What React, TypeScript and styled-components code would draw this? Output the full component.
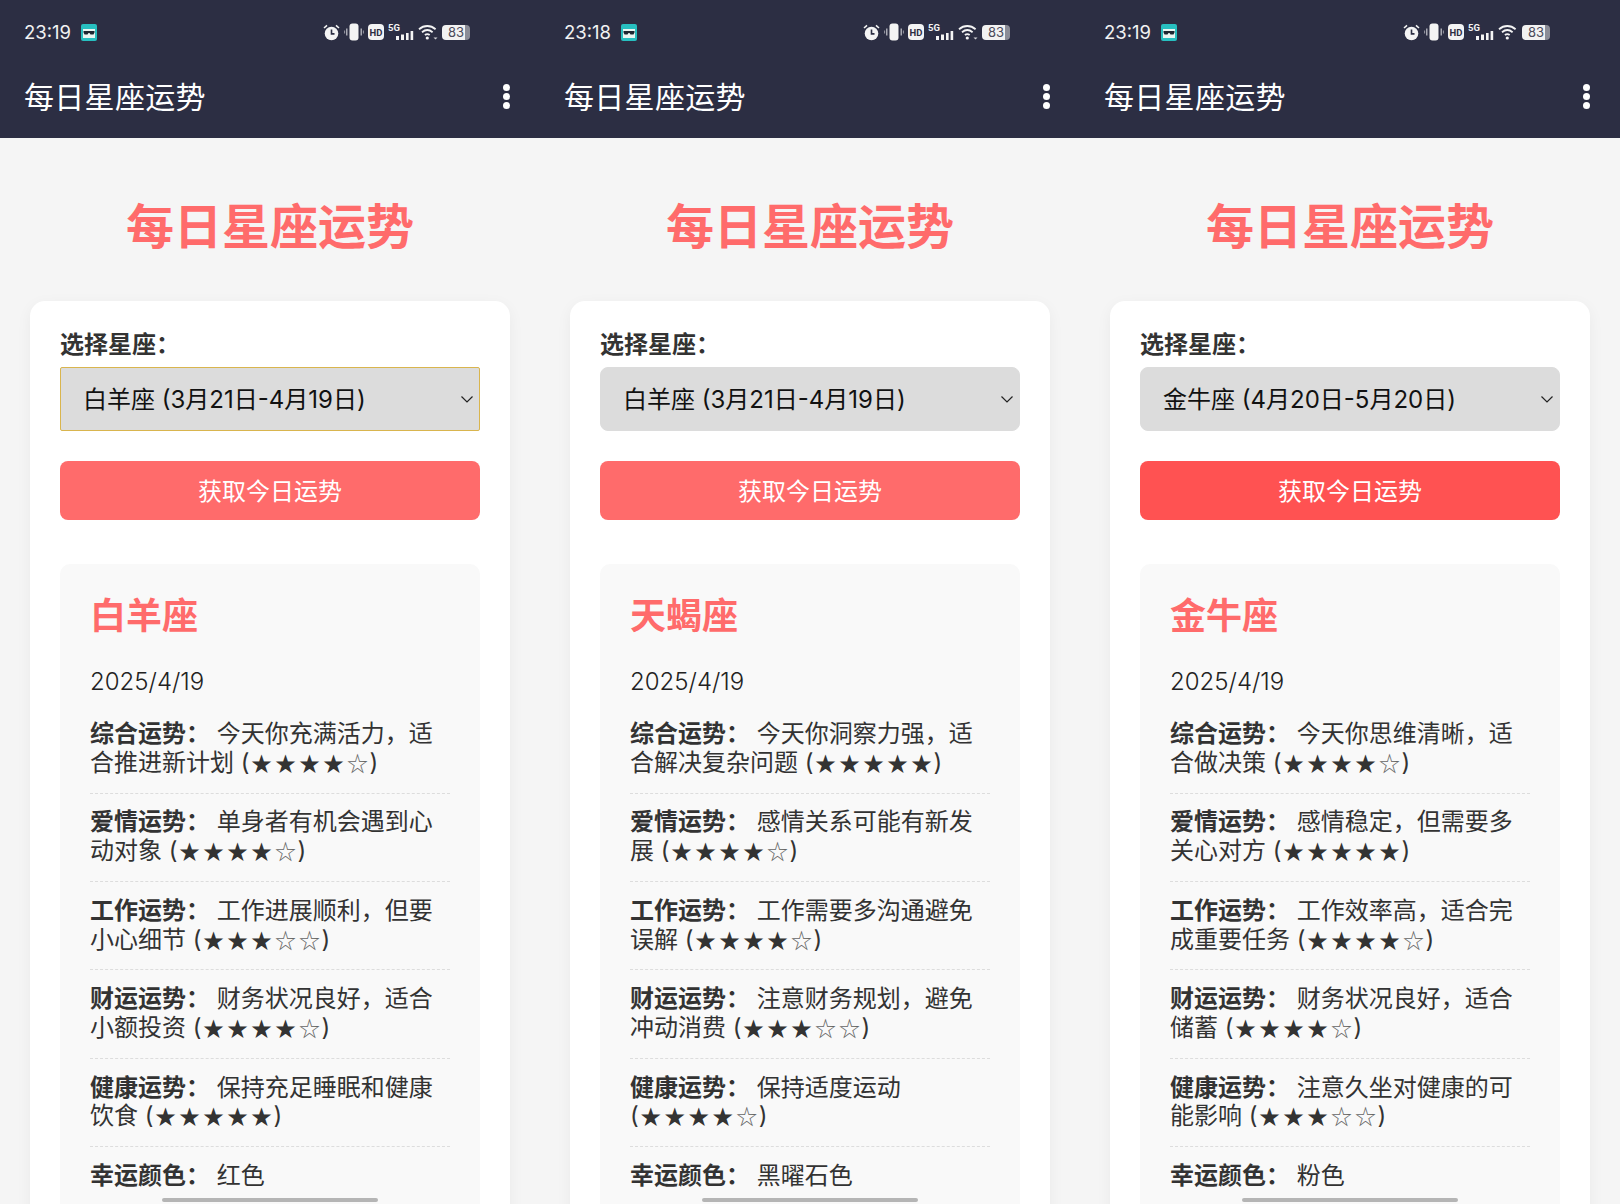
import styled, { createGlobalStyle } from "styled-components";

const GlobalStyle = createGlobalStyle`
  html, body {
    margin: 0;
    padding: 0;
    background: #f5f5f5;
  }
  * {
    box-sizing: border-box;
  }
`;

const Screens = styled.div`
  display: grid;
  grid-template-columns: repeat(3, 540px);
  width: 1620px;
  height: 1204px;
  overflow: hidden;
  font-family: Inter, "Noto Sans CJK SC", sans-serif;
`;

const Phone = styled.div`
  position: relative;
  height: 1204px;
  overflow: hidden;
  background: #f5f5f5;
`;

const TopBar = styled.header`
  height: 138px;
  background: #2c2e43;
  color: #fff;
  padding: 0 24px;
`;

const StatusBar = styled.div`
  display: flex;
  align-items: center;
  height: 64px;
  padding-right: 46px;
`;

const Time = styled.span`
  font-size: 18.5px;
  margin-right: 10px;
  color: #f2f2f2;
`;

const StatusIcons = styled.div`
  display: flex;
  align-items: center;
  gap: 4px;
  margin-left: auto;
`;

const Battery = styled.span`
  display: block;
  width: 28px;
  height: 15px;
  border-radius: 4px;
  background: linear-gradient(90deg, #f2f2f2 0 83%, #8b8c96 83% 100%);
  color: #4a4b5a;
  font-size: 13px;
  line-height: 15px;
  text-align: center;
`;

const AppBar = styled.div`
  display: flex;
  align-items: center;
  justify-content: space-between;
  height: 66px;
  padding-right: 6px;
`;

const AppTitle = styled.div`
  font-size: 30px;
  line-height: 42px;
  letter-spacing: 0.3px;
`;

const Dots = styled.div`
  display: flex;
  flex-direction: column;
  gap: 2px;
  margin-bottom: 2px;
  i {
    display: block;
    width: 7px;
    height: 7px;
    border-radius: 50%;
    background: #fff;
  }
`;

const Content = styled.main`
  padding: 57px 30px 0;
`;

const Heading = styled.h1`
  margin: 0 0 42px;
  color: #ff6b6b;
  font-size: 48px;
  line-height: 64px;
  font-weight: 700;
  text-align: center;
`;

const Card = styled.section`
  background: #fff;
  border-radius: 15px;
  box-shadow: 0 4px 15px rgba(0, 0, 0, 0.05);
  padding: 30px;
`;

const FieldLabel = styled.label`
  display: block;
  margin-bottom: 8px;
  color: #333;
  font-size: 24px;
  line-height: 28px;
  font-weight: 700;
`;

const SelectBox = styled.div<{ $focused?: boolean }>`
  display: flex;
  align-items: center;
  justify-content: space-between;
  height: 64px;
  padding: 0 5px 3px 22px;
  background: #dcdcdc;
  border: 1px solid ${(p) => (p.$focused ? "#d9b54e" : "#dcdcdc")};
  border-radius: ${(p) => (p.$focused ? "2px" : "8px")};
  color: #111;
  font-size: 24px;
`;

const ChevronIcon = styled.svg`
  margin-top: 3px;
`;

const GetButton = styled.button<{ $pressed?: boolean }>`
  display: block;
  width: 100%;
  height: 59px;
  margin-top: 30px;
  padding: 0 0 2px;
  border: 0;
  border-radius: 8px;
  background: ${(p) => (p.$pressed ? "#ff5252" : "#ff6b6b")};
  color: #fff;
  font-family: inherit;
  font-size: 24px;
`;

const ResultBox = styled.div`
  margin-top: 44px;
  padding: 30px;
  background: #f9f9f9;
  border-radius: 10px;
`;

const SignName = styled.h2`
  margin: 0 0 29px;
  color: #ff6b6b;
  font-size: 36px;
  line-height: 44px;
  font-weight: 700;
`;

const DateText = styled.p`
  margin: 0 0 23px;
  color: #222;
  font-size: 24px;
  line-height: 30px;
  font-weight: 300;
`;

const Row = styled.p`
  margin: 0 0 14.8px;
  padding-bottom: 15px;
  border-bottom: 1px dashed #ddd;
  color: #333;
  font-size: 24px;
  line-height: 28.8px;
  &:last-child {
    border-bottom: 0;
  }
  strong {
    font-weight: 700;
  }
`;

const Rating = styled.span`
  white-space: nowrap;
  letter-spacing: -0.1px;
`;

const Star = styled.span<{ $empty?: boolean }>`
  display: inline-block;
  width: 24px;
  font-family: "Noto Sans CJK SC", sans-serif;
  font-size: 21px;
  line-height: 20px;
  text-align: center;
  color: ${(p) => (p.$empty ? "#666" : "#333")};
`;

const ScrollThumb = styled.div`
  position: absolute;
  left: 162px;
  bottom: 2px;
  width: 216px;
  height: 4px;
  border-radius: 2px;
  background: #b5b5b5;
`;

function AppIcon() {
  return (
    <svg width="16" height="17" viewBox="0 0 16 17">
      <rect width="16" height="17" rx="2" fill="#27bfc0" />
      <rect x="2" y="5" width="12" height="9" fill="#e9f5f1" />
      <path d="M2.5 7h11v1.6l-1 2h-3l-1-1.6h-1l-1 1.6h-3l-1-2z" fill="#1d2530" />
    </svg>
  );
}

function AlarmIcon() {
  return (
    <svg width="17" height="17" viewBox="0 0 17 17">
      <circle cx="8.5" cy="9.5" r="6.8" fill="#f4f4f4" />
      <path d="M8.5 5.5v4.4h3" fill="none" stroke="#2c2e43" strokeWidth="1.6" />
      <path d="M1 4l3-2.6M16 4l-3-2.6" stroke="#f4f4f4" strokeWidth="1.6" />
    </svg>
  );
}

function VibrateIcon() {
  return (
    <svg width="20" height="18" viewBox="0 0 20 18">
      <rect x="5.5" y="0.5" width="9" height="17" rx="3" fill="#f4f4f4" />
      <path d="M2.8 5.5v7M17.2 5.5v7" stroke="#c9c9cf" strokeWidth="1.2" />
      <path d="M0.6 7.5v3M19.4 7.5v3" stroke="#9a9aa5" strokeWidth="1" />
    </svg>
  );
}

function HdIcon() {
  return (
    <svg width="16" height="16" viewBox="0 0 16 16">
      <rect width="16" height="16" rx="4" fill="#f4f4f4" />
      <text x="8" y="11.5" fontSize="9.5" fontWeight="700" textAnchor="middle" fill="#2c2e43" fontFamily="Roboto, sans-serif">HD</text>
    </svg>
  );
}

function SignalIcon() {
  return (
    <svg width="26" height="18" viewBox="0 0 26 18">
      <text x="0" y="8" fontSize="9.5" fontWeight="700" fill="#f4f4f4" fontFamily="Roboto, sans-serif">5G</text>
      <rect x="8" y="13" width="3" height="4" fill="#f4f4f4" />
      <rect x="13" y="11.5" width="3" height="5.5" fill="#f4f4f4" />
      <rect x="18" y="10" width="2.6" height="7" fill="#f4f4f4" />
      <rect x="22.6" y="8" width="2.6" height="9" fill="#f4f4f4" />
    </svg>
  );
}

function WifiIcon({ small }: { small?: boolean }) {
  return (
    <svg width="20" height="16" viewBox="0 0 20 16">
      <path d="M1 5.2C6 .9 12.6 .9 17.6 5.2M4 8.2c3.3-2.7 7.3-2.7 10.6 0M6.9 11c1.7-1.3 3.1-1.3 4.8 0" fill="none" stroke="#f4f4f4" strokeWidth="1.8" />
      <circle cx="9.3" cy="14" r="1.6" fill="#f4f4f4" />
      {small && <path d="M15.5 13.5h4l-2 2z" fill="#d5d5da" />}
    </svg>
  );
}

function Chevron() {
  return (
    <ChevronIcon width="14" height="9" viewBox="0 0 14 9">
      <path d="M1.5 1.5L7 7l5.5-5.5" fill="none" stroke="#222" strokeWidth="1.2" />
    </ChevronIcon>
  );
}

// the rating stays on one line, stars evenly spaced
function RowValue({ text, stars }: { text: string; stars?: string }) {
  return (
    <>
      {text}
      {stars && " "}
      {stars && (
        <Rating>
          (
          {Array.from(stars).map((ch, i) => (
            <Star key={i} $empty={ch === "☆"}>{ch}</Star>
          ))}
          )
        </Rating>
      )}
    </>
  );
}

const screens = [
  {
    time: "23:19",
    wifiDot: true,
    select: "白羊座 (3月21日-4月19日)",
    focused: true,
    pressed: false,
    sign: "白羊座",
    rows: [
      ["综合运势：", "今天你充满活力，适合推进新计划", "★★★★☆"],
      ["爱情运势：", "单身者有机会遇到心动对象", "★★★★☆"],
      ["工作运势：", "工作进展顺利，但要小心细节", "★★★☆☆"],
      ["财运运势：", "财务状况良好，适合小额投资", "★★★★☆"],
      ["健康运势：", "保持充足睡眠和健康饮食", "★★★★★"],
      ["幸运颜色：", "红色"],
    ],
  },
  {
    time: "23:18",
    wifiDot: true,
    select: "白羊座 (3月21日-4月19日)",
    focused: false,
    pressed: false,
    sign: "天蝎座",
    rows: [
      ["综合运势：", "今天你洞察力强，适合解决复杂问题", "★★★★★"],
      ["爱情运势：", "感情关系可能有新发展", "★★★★☆"],
      ["工作运势：", "工作需要多沟通避免误解", "★★★★☆"],
      ["财运运势：", "注意财务规划，避免冲动消费", "★★★☆☆"],
      ["健康运势：", "保持适度运动", "★★★★☆"],
      ["幸运颜色：", "黑曜石色"],
    ],
  },
  {
    time: "23:19",
    wifiDot: false,
    select: "金牛座 (4月20日-5月20日)",
    focused: false,
    pressed: true,
    sign: "金牛座",
    rows: [
      ["综合运势：", "今天你思维清晰，适合做决策", "★★★★☆"],
      ["爱情运势：", "感情稳定，但需要多关心对方", "★★★★★"],
      ["工作运势：", "工作效率高，适合完成重要任务", "★★★★☆"],
      ["财运运势：", "财务状况良好，适合储蓄", "★★★★☆"],
      ["健康运势：", "注意久坐对健康的可能影响", "★★★☆☆"],
      ["幸运颜色：", "粉色"],
    ],
  },
];

export default function App() {
  return (
    <>
      <GlobalStyle />
      <Screens>
        {screens.map((s, i) => (
          <Phone key={i}>
            <TopBar>
              <StatusBar>
                <Time>{s.time}</Time>
                <AppIcon />
                <StatusIcons>
                  <AlarmIcon />
                  <VibrateIcon />
                  <HdIcon />
                  <SignalIcon />
                  <WifiIcon small={s.wifiDot} />
                  <Battery>83</Battery>
                </StatusIcons>
              </StatusBar>
              <AppBar>
                <AppTitle>每日星座运势</AppTitle>
                <Dots>
                  <i />
                  <i />
                  <i />
                </Dots>
              </AppBar>
            </TopBar>
            <Content>
              <Heading>每日星座运势</Heading>
              <Card>
                <FieldLabel>选择星座：</FieldLabel>
                <SelectBox $focused={s.focused}>
                  {s.select}
                  <Chevron />
                </SelectBox>
                <GetButton $pressed={s.pressed}>获取今日运势</GetButton>
                <ResultBox>
                  <SignName>{s.sign}</SignName>
                  <DateText>2025/4/19</DateText>
                  {s.rows.map(([label, value, stars]) => (
                    <Row key={label}>
                      <strong>{label}</strong> <RowValue text={value} stars={stars} />
                    </Row>
                  ))}
                </ResultBox>
              </Card>
            </Content>
            <ScrollThumb />
          </Phone>
        ))}
      </Screens>
    </>
  );
}
